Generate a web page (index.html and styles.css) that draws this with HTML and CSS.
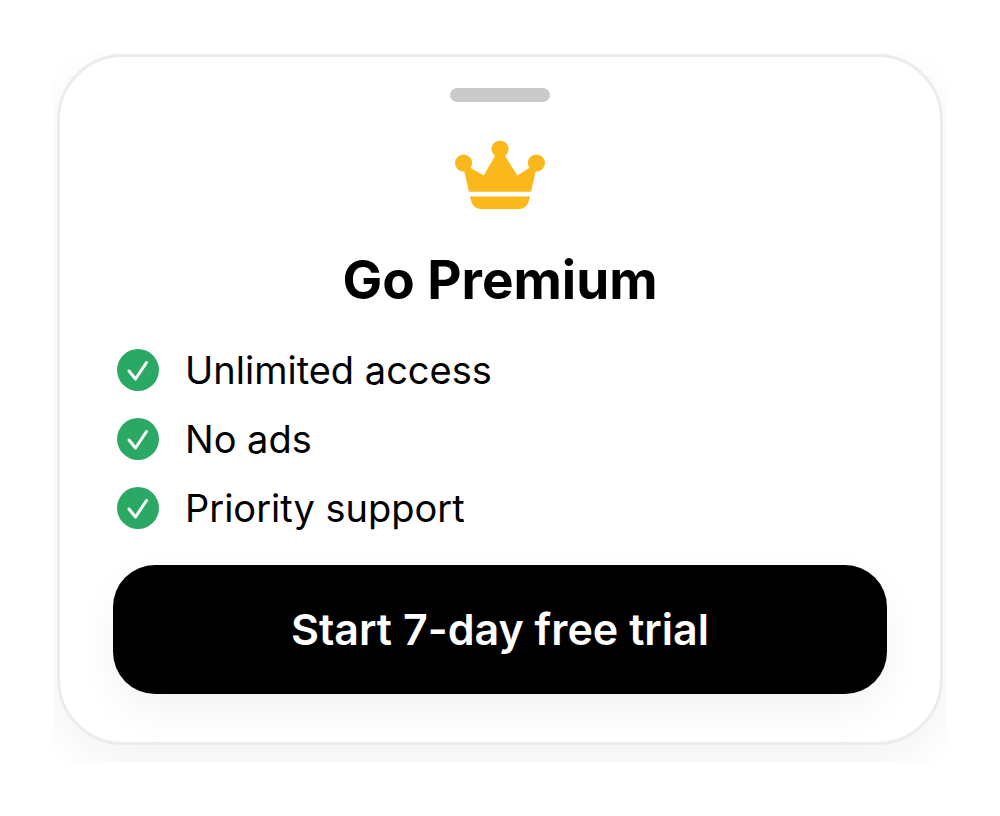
FILE: index.html
```html
<!DOCTYPE html>
<html lang="en">
<head>
    <meta charset="UTF-8">
    <meta name="viewport" content="width=device-width, initial-scale=1.0">
    <title>Go Premium</title>
    <link rel="stylesheet" href="styles.css">
</head>
<body>
    <main class="stage">
        <section class="sheet">
            <div class="handle"></div>

            <svg class="crown" viewBox="0 0 90 70" aria-hidden="true">
                <circle cx="45" cy="9" r="8.6"/>
                <circle cx="8.6" cy="23" r="8.6"/>
                <circle cx="81.4" cy="23" r="8.6"/>
                <path d="M40.500 15 H49.500 L62.300 35.500 L76 27 L81 30 L76 51.700 H14 L9 30 L14 27 L28.700 35.500 Z"/>
                <path d="M15 56.500 H75 L73.800 61 Q71.500 69 64 69 H26 Q18.500 69 16.200 61 Z"/>
            </svg>

            <h1>Go Premium</h1>

            <ul class="features">
                <li>
                    <svg class="check" viewBox="0 0 42 42" aria-hidden="true">
                        <circle cx="21" cy="21" r="21"/>
                        <path d="M12 22 L18.500 30 L29.500 13.500"/>
                    </svg>
                    <span>Unlimited access</span>
                </li>
                <li>
                    <svg class="check" viewBox="0 0 42 42" aria-hidden="true">
                        <circle cx="21" cy="21" r="21"/>
                        <path d="M12 22 L18.500 30 L29.500 13.500"/>
                    </svg>
                    <span>No ads</span>
                </li>
                <li>
                    <svg class="check" viewBox="0 0 42 42" aria-hidden="true">
                        <circle cx="21" cy="21" r="21"/>
                        <path d="M12 22 L18.500 30 L29.500 13.500"/>
                    </svg>
                    <span>Priority support</span>
                </li>
            </ul>

            <button class="btn" type="button">Start 7-day free trial</button>
        </section>
    </main>
</body>
</html>
```
FILE: styles.css
```css
* {
    box-sizing: border-box;
}

body {
    font-family: Inter, "Liberation Sans", sans-serif;
    background: #fff;
    color: #000;
    margin: 0;
    padding: 53px;
}

/* clips the shadow around the sheet */
.stage {
    overflow: hidden;
    padding: 1px 4px 18px;
}

.sheet {
    display: flex;
    flex-direction: column;
    align-items: center;
    background: #fff;
    border: 3px solid #ececec;
    border-radius: 66px;
    padding: 31px 53px 48px;
    box-shadow: 0 16px 48px rgba(0, 0, 0, 0.05);
}

.handle {
    width: 100px;
    height: 14px;
    border-radius: 7px;
    background: #cacaca;
}

.crown {
    width: 90px;
    height: 70px;
    margin-top: 38px;
    fill: #fab81b;
}

h1 {
    margin: 36px 0 0;
    font-size: 53px;
    font-weight: 700;
    line-height: 68px;
}

.features {
    align-self: stretch;
    display: flex;
    flex-direction: column;
    gap: 21px;
    list-style: none;
    margin: 32px 0 0;
    padding: 0 4px;
}

.features li {
    display: flex;
    align-items: center;
    gap: 26px;
    font-size: 38px;
    line-height: 48px;
}

.check {
    flex: none;
    width: 42px;
    height: 42px;
    fill: #2aa864;
}

.check path {
    fill: none;
    stroke: #fff;
    stroke-width: 3;
    stroke-linecap: round;
    stroke-linejoin: round;
}

.btn {
    align-self: stretch;
    margin-top: 33px;
    padding: 38px 20px;
    border: none;
    border-radius: 42px;
    background: #000;
    color: #fff;
    font-family: inherit;
    font-size: 43px;
    font-weight: 600;
    line-height: 53px;
    cursor: pointer;
    box-shadow: 0 16px 40px rgba(0, 0, 0, 0.05);
}
```
